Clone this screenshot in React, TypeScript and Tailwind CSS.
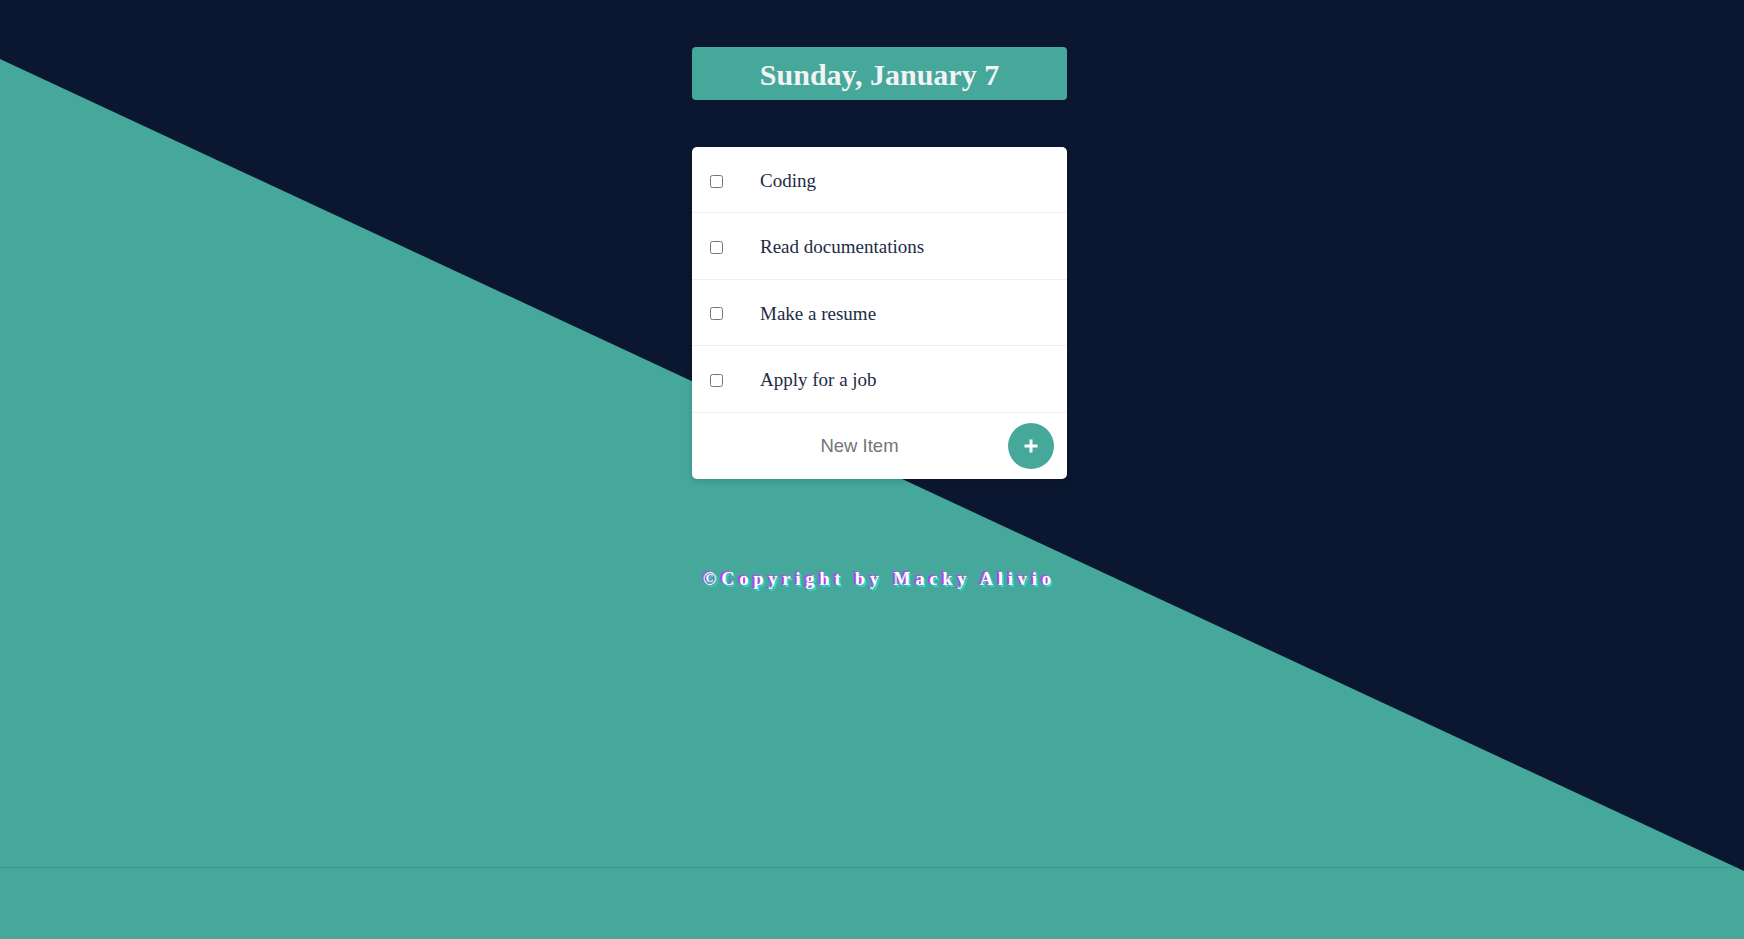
import React from "react";

const items = ["Coding", "Read documentations", "Make a resume", "Apply for a job"];

export default function App() {
  return (
    <div className="relative h-[939px] w-full overflow-hidden bg-[#0b1730]">
      <div className="absolute inset-0 bg-[#45a89a] [clip-path:polygon(0_59px,100%_871px,100%_100%,0_100%)]">
        <div className="absolute left-0 right-0 top-[867px] h-px bg-[#3a968a]" />
      </div>
      <div className="relative flex flex-col items-center pl-[15px] pt-[47px]">
        <div className="flex h-[53px] w-[375px] items-center justify-center rounded-[4px] bg-[#45a89a] pt-[2px]">
          <h1 className="text-[30px] font-bold leading-none text-[#f3f3f3] [font-family:'Liberation_Serif',serif]">
            Sunday, January 7
          </h1>
        </div>
        <div className="mt-[47px] w-[375px] overflow-hidden rounded-[5px] bg-white shadow-[0_2px_6px_rgba(0,0,0,0.15)]">
          {items.map((t) => (
            <div key={t} className="flex h-[66.4px] items-center border-b border-[#efefef] pl-[18px] pt-[3px]">
              <input type="checkbox" className="m-0 h-[13px] w-[13px]" />
              <span className="ml-[37px] text-[19px] text-[#222b45] [font-family:'Liberation_Serif',serif]">{t}</span>
            </div>
          ))}
          <div className="flex h-[66.4px] items-center pr-[13px] pt-[1px]">
            <input
              type="text"
              placeholder="New Item"
              className="min-w-0 flex-1 bg-transparent pl-[32px] text-center text-[18.5px] text-[#333] outline-none placeholder:text-[#757575] [font-family:'Liberation_Sans',sans-serif]"
            />
            <button className="ml-[13px] flex h-[46px] w-[46px] items-center justify-center rounded-full bg-[#45a89a]">
              <svg width="16" height="16" viewBox="0 0 16 16">
                <path d="M8 1.5v13M1.5 8h13" stroke="white" strokeWidth="3" strokeLinecap="butt" />
              </svg>
            </button>
          </div>
        </div>
        <p className="mt-[91px] text-[18px] font-bold leading-none tracking-[5px] text-white [font-family:'Liberation_Serif',serif] [text-shadow:-2px_-1px_0_#c83cf2,2px_2px_0_#2fd5d8]">
          ©Copyright by Macky Alivio
        </p>
      </div>
    </div>
  );
}
